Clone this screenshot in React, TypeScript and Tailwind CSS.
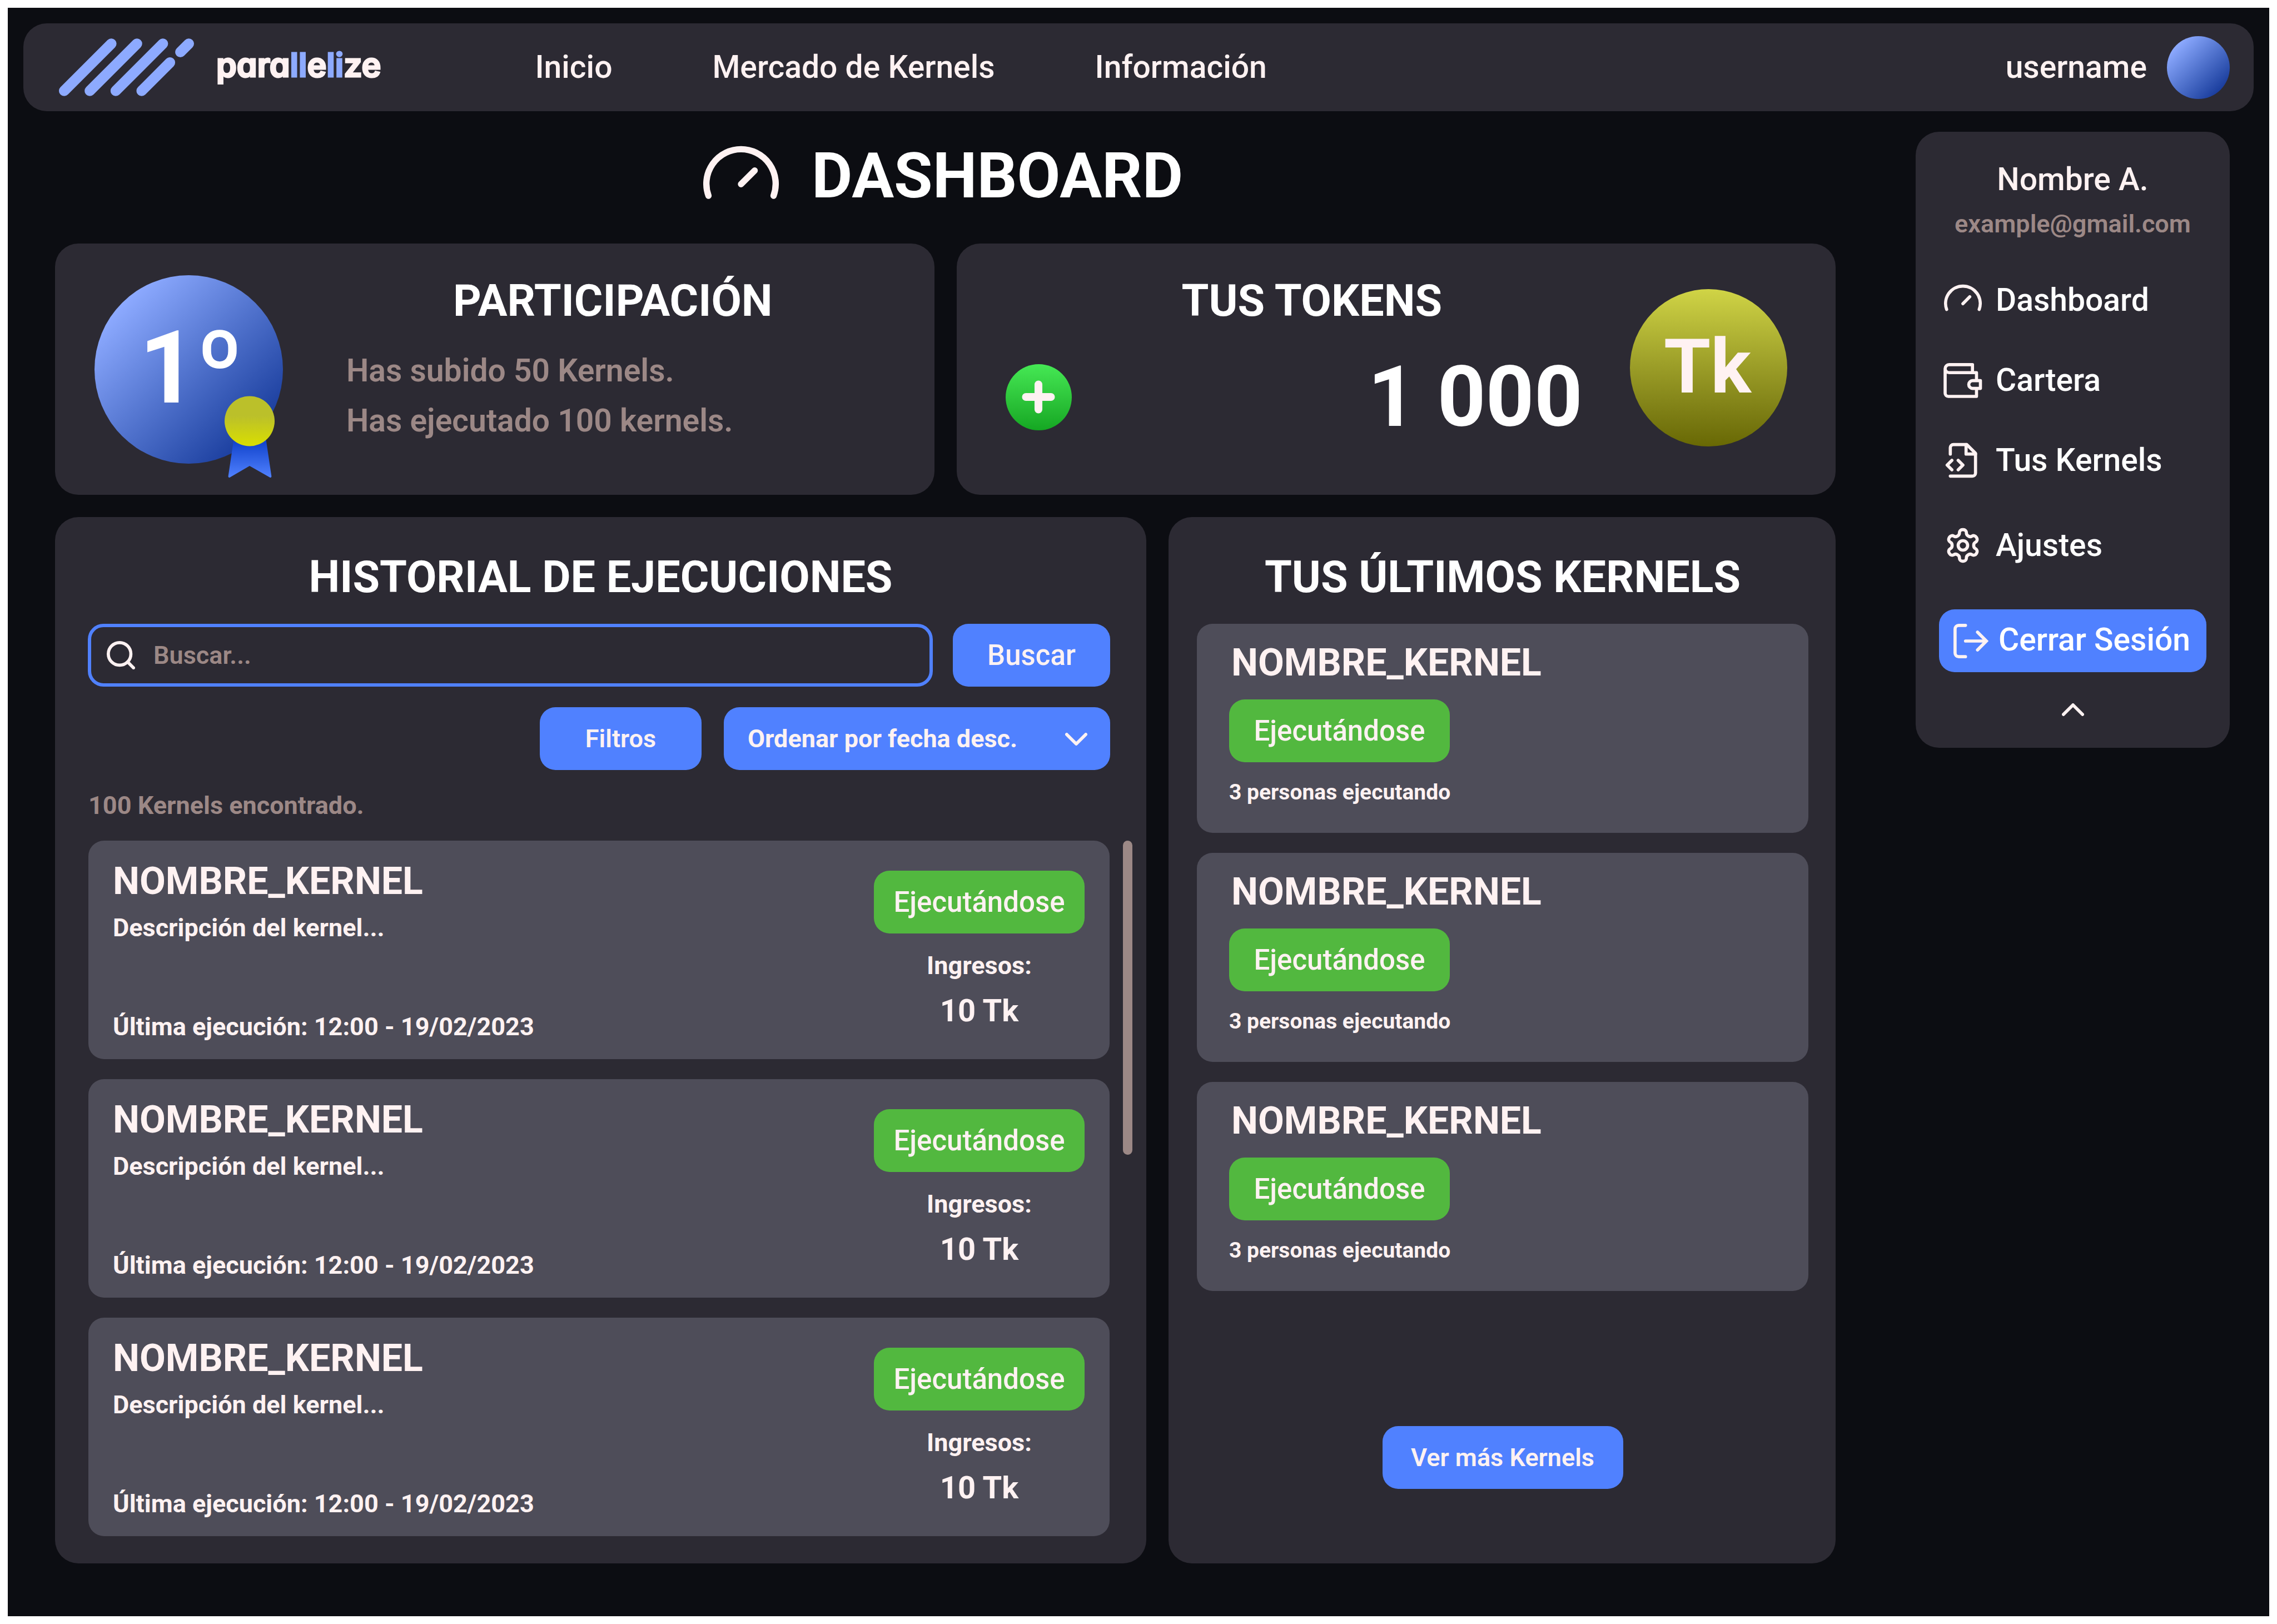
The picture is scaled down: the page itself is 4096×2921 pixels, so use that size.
import type { ReactNode } from "react";

const navLinks = ["Inicio", "Mercado de Kernels", "Información"];

const executions = [1, 2, 3].map((id) => ({
  id,
  name: "NOMBRE_KERNEL",
  description: "Descripción del kernel...",
  lastRun: "Última ejecución: 12:00 - 19/02/2023",
  income: "10 Tk",
}));

const latestKernels = [1, 2, 3].map((id) => ({
  id,
  name: "NOMBRE_KERNEL",
  people: "3 personas ejecutando",
}));

function LogoMark() {
  return (
    <svg className="h-[104px] w-[243px] shrink-0" viewBox="0 0 258 110" fill="none" stroke="#8DAAFF" strokeWidth="20" strokeLinecap="round" aria-hidden="true">
      <path d="M10 100 100 10M59 100 149 10M108.500 100 198.500 10M158 100 212 46M232 26 248 10" />
    </svg>
  );
}

function GaugeIcon({ className }: { className: string }) {
  return (
    <svg className={className} viewBox="0 -13 144 144" fill="none" stroke="#FFF2F2" strokeWidth="12" strokeLinecap="round" aria-hidden="true">
      <path d="M10 94A66 66 0 1 1 134 94M72 72 98 46" />
    </svg>
  );
}

function WalletIcon() {
  return (
    <svg className="h-[63px] w-[70px]" viewBox="0 0 74 67" fill="none" stroke="#FFF2F2" strokeWidth="6" strokeLinejoin="round" aria-hidden="true">
      <path d="M55.300 18.400V3H10.700a7.700 7.700 0 0 0 0 15.400H63v15.300M63 48.500v15.300H9a6 6 0 0 1-6-6V10.700" />
      <path d="M70.500 33.700H55.600a7.400 7.400 0 0 0 0 14.800h14.900Z" />
    </svg>
  );
}

function FileCodeIcon() {
  return (
    <svg className="size-[68px]" viewBox="0 0 24 24" fill="none" stroke="#FFF2F2" strokeWidth="2" strokeLinecap="round" strokeLinejoin="round" aria-hidden="true">
      <path d="M4 22h14a2 2 0 0 0 2-2V7.500L14.500 2H6a2 2 0 0 0-2 2v4" />
      <path d="M14 2v6h6" />
      <path d="m9 18 3-3-3-3M5 12l-3 3 3 3" />
    </svg>
  );
}

function GearIcon() {
  return (
    <svg className="size-[68px]" viewBox="0 0 24 24" fill="none" stroke="#FFF2F2" strokeWidth="2" strokeLinecap="round" strokeLinejoin="round" aria-hidden="true">
      <path d="M12.22 2h-.44a2 2 0 0 0-2 2v.18a2 2 0 0 1-1 1.73l-.43.25a2 2 0 0 1-2 0l-.15-.08a2 2 0 0 0-2.73.73l-.22.38a2 2 0 0 0 .73 2.73l.15.1a2 2 0 0 1 1 1.72v.51a2 2 0 0 1-1 1.74l-.15.09a2 2 0 0 0-.73 2.73l.22.38a2 2 0 0 0 2.73.73l.15-.08a2 2 0 0 1 2 0l.43.25a2 2 0 0 1 1 1.73V20a2 2 0 0 0 2 2h.44a2 2 0 0 0 2-2v-.18a2 2 0 0 1 1-1.73l.43-.25a2 2 0 0 1 2 0l.15.08a2 2 0 0 0 2.73-.73l.22-.39a2 2 0 0 0-.73-2.73l-.15-.08a2 2 0 0 1-1-1.74v-.5a2 2 0 0 1 1-1.74l.15-.09a2 2 0 0 0 .73-2.73l-.22-.38a2 2 0 0 0-2.73-.73l-.15.08a2 2 0 0 1-2 0l-.43-.25a2 2 0 0 1-1-1.73V4a2 2 0 0 0-2-2z" />
      <circle cx="12" cy="12" r="3" />
    </svg>
  );
}

function ExitIcon() {
  return (
    <svg className="h-[62px] w-[64px] shrink-0" viewBox="0 0 68 66" fill="none" stroke="#FFF2F2" strokeWidth="6" strokeLinecap="round" aria-hidden="true">
      <path d="M23 3H10a7 7 0 0 0-7 7v46a7 7 0 0 0 7 7h13M23 33h39M46 16l17 17-17 17" />
    </svg>
  );
}

function Chevron({ className }: { className: string }) {
  return (
    <svg className={className} viewBox="0 0 42 24" fill="none" stroke="#FFF2F2" strokeWidth="6" strokeLinecap="round" strokeLinejoin="round" aria-hidden="true">
      <path d="M3 3 21 21 39 3" />
    </svg>
  );
}

function Medal() {
  return (
    <svg className="absolute top-[217px] left-[234px] h-[148px] w-[90px]" viewBox="0 0 96 157" aria-hidden="true">
      <defs>
        <linearGradient id="ribbon" x1="0" y1="0" x2="0" y2="1">
          <stop offset="0.100" stopColor="#1244CC" />
          <stop offset="1" stopColor="#5081FF" />
        </linearGradient>
        <linearGradient id="gold" x1="0" y1="0" x2="0" y2="1">
          <stop offset="0.400" stopColor="#BBC02A" />
          <stop offset="1" stopColor="#DADF00" />
        </linearGradient>
      </defs>
      <path d="M18 80H79L90 154Q90 157 87 156L48 134 10 156Q7 157 7 154Z" fill="url(#ribbon)" />
      <circle cx="48" cy="48" r="48" fill="url(#gold)" />
    </svg>
  );
}

function StatusBadge({ className }: { className: string }) {
  return (
    <span className={`flex h-[113px] items-center justify-center rounded-[28px] bg-[#52B83F] text-[51px] leading-[60px] font-medium ${className}`}>
      Ejecutándose
    </span>
  );
}

function SideLink({ icon, children }: { icon: ReactNode; children: ReactNode }) {
  return (
    <a href="#" className="flex h-[66px] items-center gap-[16px] text-white">
      <span className="flex w-[86px] shrink-0 justify-center">{icon}</span>
      {children}
    </a>
  );
}

function NavBar() {
  return (
    <header className="flex h-[158px] items-center rounded-[42px] bg-[#2C2A33] pr-[43px] pl-[64px] text-[57px] leading-[66px] font-medium">
      <a href="#" className="flex shrink-0 items-center gap-[40px]" aria-label="parallelize">
        <LogoMark />
        <span className="pb-2 font-[Inter,sans-serif] text-[59px] leading-[72px] font-semibold [-webkit-text-stroke:3px_currentColor] [font-feature-settings:'cv11']">
          para<span className="text-[#8DAAFF]">ll</span>e<span className="text-[#8DAAFF]">li</span>ze
        </span>
      </a>
      <nav className="ml-[277px] flex flex-1 gap-[180px]">
        {navLinks.map((label) => (
          <a key={label} href="#" className="whitespace-nowrap">{label}</a>
        ))}
      </nav>
      <button type="button" className="flex items-center gap-[36px]">
        username
        <span className="size-[113px] rounded-full bg-linear-to-br from-[#8DAAFF] from-15% to-[#1B3E9E] to-85%" />
      </button>
    </header>
  );
}

function ParticipationCard() {
  return (
    <section className="flex h-[452px] items-start gap-[114px] rounded-[42px] bg-[#2C2A33] pt-[57px] pr-[99px] pl-[71px]">
      <div className="relative flex size-[339px] shrink-0 items-center justify-center rounded-full bg-linear-to-br from-[#8DAAFF] from-15% to-[#1B3E9E] to-85%">
        <span className="pb-1.5 pl-2 text-[181px] leading-[212px] font-bold text-white">1º</span>
        <Medal />
      </div>
      <div className="flex-1">
        <h2 className="text-center text-[79px] leading-[92px] font-bold text-white">PARTICIPACIÓN</h2>
        <p className="mt-[35px] text-[57px] leading-[90px] text-[#9C8886]">
          Has subido 50 Kernels.
          <br />
          Has ejecutado 100 kernels.
        </p>
      </div>
    </section>
  );
}

function TokensCard() {
  return (
    <section className="flex h-[452px] items-start gap-[85px] rounded-[42px] bg-[#2C2A33] pt-[57px] pr-[87px] pl-[88px]">
      <div className="flex-1">
        <h2 className="pl-16 text-center text-[79px] leading-[92px] font-bold text-white">TUS TOKENS</h2>
        <div className="mt-[38px] flex items-center justify-between">
          <button type="button" aria-label="Añadir tokens" className="flex size-[119px] items-center justify-center rounded-full bg-linear-to-b from-[#45E854] to-[#14A722]">
            <svg className="size-[60px]" viewBox="0 0 64 64" stroke="#FFF2F2" strokeWidth="15" strokeLinecap="round" aria-hidden="true">
              <path d="M32 8V56M8 32H56" />
            </svg>
          </button>
          <span className="text-[152px] leading-[178px] font-bold text-white">1 000</span>
        </div>
      </div>
      <div className="mt-[25px] flex size-[283px] shrink-0 items-center justify-center rounded-full bg-linear-to-b from-[#D0D446] to-[#686804] pr-1 pb-1 text-[136px] leading-[160px] font-bold">
        Tk
      </div>
    </section>
  );
}

function HistoryPanel() {
  return (
    <section className="rounded-[42px] bg-[#2C2A33] pt-[62px] pb-[49px]">
      <h2 className="text-center text-[79px] leading-[92px] font-bold text-white">HISTORIAL DE EJECUCIONES</h2>
      <div className="mt-[38px] flex gap-[36px] pr-[65px] pl-[59px]">
        <label className="flex h-[113px] flex-1 items-center gap-[33px] rounded-[28px] border-[6px] border-[#5081FF] px-[28px]">
          <svg className="size-[51px] shrink-0" viewBox="0 0 54 54" fill="none" stroke="#FFF2F2" strokeWidth="6" strokeLinecap="round" aria-hidden="true">
            <circle cx="24.500" cy="24.500" r="21.500" />
            <path d="M40 40 51 51" />
          </svg>
          <input type="text" aria-label="Buscar" placeholder="Buscar..." className="min-w-0 flex-1 bg-transparent text-[45px] leading-[53px] outline-none placeholder:text-[#9C8886]" />
        </label>
        <button type="button" className="h-[113px] w-[283px] rounded-[28px] bg-[#5081FF] text-[51px] leading-[60px] font-medium">Buscar</button>
      </div>
      <div className="mt-[37px] flex justify-end gap-[40px] pr-[65px] pl-[59px]">
        <button type="button" className="h-[113px] w-[291px] rounded-[28px] bg-[#5081FF] text-[45px] leading-[53px]">Filtros</button>
        <div className="relative w-[695px]">
          <select aria-label="Ordenar" className="h-[113px] w-full appearance-none rounded-[28px] bg-[#5081FF] pl-[43px] text-[45px] leading-[53px] font-bold outline-none">
            <option>Ordenar por fecha desc.</option>
          </select>
          <Chevron className="pointer-events-none absolute top-[46px] right-[41px] h-[23px] w-[40px]" />
        </div>
      </div>
      <p className="my-[37px] pl-[60px] text-[45px] leading-[53px] font-bold text-[#9C8886]">100 Kernels encontrado.</p>
      <div className="flex gap-[24px] pr-[25px] pl-[60px]">
        <ul className="flex flex-1 flex-col gap-[36px]">
          {executions.map((item) => (
            <li key={item.id} className="flex justify-between rounded-[28px] bg-[#4E4D59] pr-[45px] pl-[44px] text-[45px] leading-[53px] font-bold">
              <div className="flex flex-col pt-[33px] pb-[32px]">
                <h3 className="text-[68px] leading-[80px]">{item.name}</h3>
                <p className="mt-[17px]">{item.description}</p>
                <p className="mt-auto">{item.lastRun}</p>
              </div>
              <div className="py-[54px] text-center">
                <StatusBadge className="w-[379px]" />
                <p className="mt-[31px]">Ingresos:</p>
                <p className="mt-[22px] text-[56px] leading-[66px]">{item.income}</p>
              </div>
            </li>
          ))}
        </ul>
        <div className="h-[565px] w-[17px] rounded-full bg-[#9C8886]" />
      </div>
    </section>
  );
}

function LatestPanel() {
  return (
    <section className="flex flex-col rounded-[42px] bg-[#2C2A33] pt-[62px] pr-[49px] pb-[134px] pl-[51px]">
      <h2 className="text-center text-[79px] leading-[92px] font-bold text-white">TUS ÚLTIMOS KERNELS</h2>
      <ul className="mt-[38px] flex flex-col gap-[36px]">
        {latestKernels.map((item) => (
          <li key={item.id} className="rounded-[28px] bg-[#4E4D59] px-[58px] pt-[30px] pb-[49px] font-bold">
            <h3 className="px-1 text-[68px] leading-[80px]">{item.name}</h3>
            <StatusBadge className="mt-[26px] w-[397px]" />
            <p className="mt-[31px] text-[39px] leading-[47px]">{item.people}</p>
          </li>
        ))}
      </ul>
      <button type="button" className="mt-auto h-[113px] w-[433px] self-center rounded-[28px] bg-[#5081FF] text-[45px] leading-[53px]">
        Ver más Kernels
      </button>
    </section>
  );
}

function ProfileMenu() {
  return (
    <aside className="mt-[37px] flex w-[565px] shrink-0 flex-col self-start rounded-[42px] bg-[#2C2A33] px-[42px] pt-[53px] pb-[57px] text-[57px] leading-[66px] font-medium">
      <p className="text-center">Nombre A.</p>
      <p className="mt-[20px] text-center text-[45px] leading-[53px] font-semibold text-[#9C8886]">example@gmail.com</p>
      <nav className="mt-[78px] flex flex-col gap-[78px]">
        <SideLink icon={<GaugeIcon className="size-[68px]" />}>Dashboard</SideLink>
        <SideLink icon={<WalletIcon />}>Cartera</SideLink>
        <SideLink icon={<FileCodeIcon />}>Tus Kernels</SideLink>
      </nav>
      <nav className="mt-[87px]">
        <SideLink icon={<GearIcon />}>Ajustes</SideLink>
      </nav>
      <button type="button" className="mt-[82px] flex h-[113px] items-center gap-[17px] rounded-[28px] bg-[#5081FF] pl-[26px] whitespace-nowrap text-white">
        <ExitIcon />
        <span className="pb-1">Cerrar Sesión</span>
      </button>
      <button type="button" aria-label="Cerrar menú" className="mt-[56px] self-center">
        <Chevron className="h-[23px] w-[40px] rotate-180" />
      </button>
    </aside>
  );
}

export default function App() {
  return (
    <div className="flex min-h-screen bg-white p-[14px]">
      <div className="flex-1 bg-[#0C0D12] p-[28px] font-[Roboto,sans-serif] font-semibold text-[#FFF2F2]">
        <NavBar />
        <div className="flex gap-[144px] pr-[43px] pl-[57px]">
          <main className="min-w-0 flex-1">
            <div className="flex h-[238px] items-center justify-center gap-[59px] pr-2">
              <GaugeIcon className="size-[136px]" />
              <h1 className="pb-1 text-[113px] leading-[132px] font-bold text-white">DASHBOARD</h1>
            </div>
            <div className="grid grid-cols-2 gap-[40px]">
              <ParticipationCard />
              <TokensCard />
            </div>
            <div className="mt-[40px] grid grid-cols-[1963fr_1200fr] gap-[40px]">
              <HistoryPanel />
              <LatestPanel />
            </div>
          </main>
          <ProfileMenu />
        </div>
      </div>
    </div>
  );
}
